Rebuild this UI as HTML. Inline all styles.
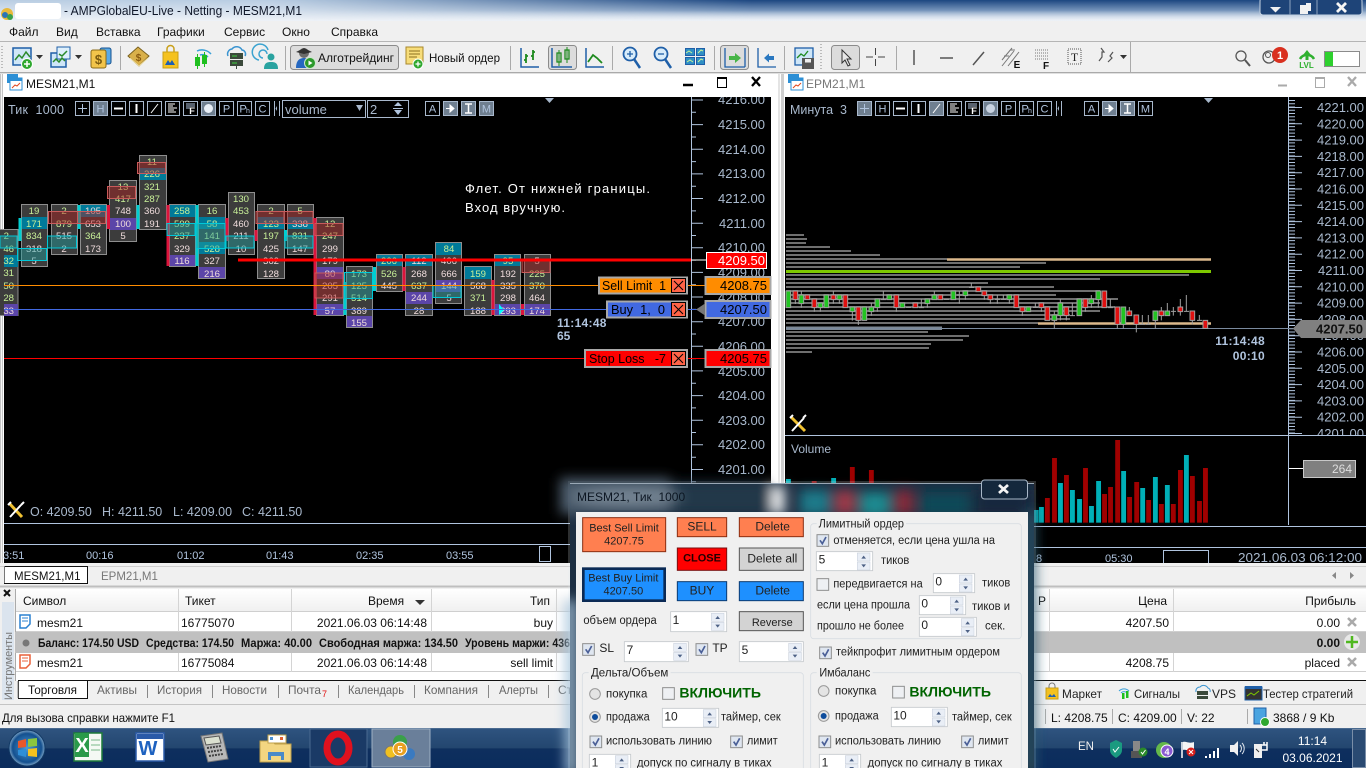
<!DOCTYPE html>
<html><head><meta charset="utf-8"><title>MESM21,M1</title>
<style>
html,body{margin:0;padding:0;background:#000;width:1366px;height:768px;overflow:hidden}
svg{display:block;font-family:"Liberation Sans","Noto Sans CJK SC",sans-serif}
.cl text{font-size:9.6px;text-anchor:middle}
.g{fill:#c8f098}.p{fill:#efdcdc}
.ax{fill:#a9b9cd;font-size:13px;text-anchor:end}
.ts{fill:#b0c4de;font-size:11px}
.m{font-size:12px;fill:#111}
.tb{fill:none;stroke:#a9b9cd;stroke-width:1}
.tf{fill:#6f7f90;stroke:#a9b9cd;stroke-width:1}
.tt{fill:#b0c4de;font-size:11px;text-anchor:middle}
.d text{font-size:36px;fill:#222}
.t{font-size:12px;fill:#111}
.gt{font-size:12px;fill:#666}
</style></head><body>
<svg width="1366" height="768" viewBox="0 0 1366 768" xmlns="http://www.w3.org/2000/svg">
<defs>
<linearGradient id="tbase" x1="0" y1="0" x2="0" y2="1"><stop offset="0" stop-color="#b9cde2"/><stop offset="1" stop-color="#eef2f7"/></linearGradient>
<linearGradient id="tdark" x1="0" y1="0" x2="0" y2="1"><stop offset="0" stop-color="#1c4680"/><stop offset=".5" stop-color="#7795bb"/><stop offset="1" stop-color="#e6ecf4" stop-opacity="0"/></linearGradient>
<linearGradient id="hm" x1="0" y1="0" x2="1" y2="0"><stop offset=".2" stop-color="#000"/><stop offset=".55" stop-color="#fff"/></linearGradient>
<mask id="mh"><rect width="1366" height="21" fill="url(#hm)"/></mask>
<linearGradient id="tk" x1="0" y1="0" x2="0" y2="1"><stop offset="0" stop-color="#2f5480"/><stop offset=".5" stop-color="#23466f"/><stop offset=".52" stop-color="#0e2f5e"/><stop offset="1" stop-color="#0b2c5c"/></linearGradient>
<linearGradient id="hd" x1="0" y1="0" x2="0" y2="1"><stop offset="0" stop-color="#fff"/><stop offset="1" stop-color="#f0f0f0"/></linearGradient>
<radialGradient id="orb"><stop offset="0" stop-color="#4a9bd8"/><stop offset=".8" stop-color="#14508f"/><stop offset="1" stop-color="#7fa6c8"/></radialGradient>
<filter id="bl" x="-20%" y="-20%" width="140%" height="140%"><feGaussianBlur stdDeviation="6"/></filter>
<g id="spin"><rect x="0" y="0" width="38" height="24" fill="#e9eef6" stroke="#c4ccd8" stroke-width="1.5"/><rect x="0" y="27" width="38" height="24" fill="#e9eef6" stroke="#c4ccd8" stroke-width="1.5"/><path d="M12 17l7-9 7 9zM12 34l7 9 7-9z" fill="#4d6185"/></g>
<g id="chk"><rect x="1" y="1" width="35" height="35" fill="#dfe6f0" stroke="#8e8f8f" stroke-width="3"/><path d="M10 18l7 10 11-20" fill="none" stroke="#4a5f97" stroke-width="5"/></g>
<g id="unc"><rect x="1" y="1" width="35" height="35" fill="#eef0f3" stroke="#8e8f8f" stroke-width="3"/></g>
</defs>

<!-- page background -->
<rect width="1366" height="768" fill="#f0f0f0"/>

<!-- title bar -->
<rect width="1366" height="21" fill="url(#tbase)"/>
<rect width="1366" height="21" fill="url(#tdark)" mask="url(#mh)"/>
<rect x="15" y="3" width="46" height="16" fill="#fff" rx="3"/>
<circle cx="7" cy="14" r="6" fill="#e8b93a"/><circle cx="5" cy="15" r="3" fill="#2a74b8"/><circle cx="10" cy="17" r="3" fill="#3aa04a"/>
<text x="64" y="15" font-size="13" fill="#10182a" textLength="238" lengthAdjust="spacingAndGlyphs">- AMPGlobalEU-Live - Netting - MESM21,M1</text>
<!-- window controls -->
<rect x="1260" y="-2" width="102" height="17" rx="3" fill="#1e4478" stroke="#c6d3e2"/>
<path d="M1290 0V15M1317 0V15" stroke="#8fa5c0"/>
<path d="M1270 7h11l-5.500 5.500z" fill="#f2f2f2"/>
<path d="M1300 5h6v-2h5v8h-3v3h-8z" fill="#f2f2f2"/>
<path d="M1337 3l9 9M1346 3l-9 9" stroke="#f5f5f5" stroke-width="2.800"/>

<!-- menu -->
<rect y="21" width="1366" height="20" fill="#f0f0f0"/>
<text class="m" x="9" y="36">Файл</text><text class="m" x="56" y="36">Вид</text><text class="m" x="96" y="36">Вставка</text><text class="m" x="157" y="36">Графики</text><text class="m" x="224" y="36">Сервис</text><text class="m" x="282" y="36">Окно</text><text class="m" x="331" y="36">Справка</text>
<rect y="41" width="1366" height="1" fill="#b5b5b5"/>

<!-- toolbar -->
<rect y="42" width="1366" height="30" fill="#f0f0f0"/>
<rect y="72" width="1366" height="1" fill="#aaa"/>
<path d="M2 46v24" stroke="#bbb" stroke-dasharray="1 2" stroke-width="2"/>
<!-- new chart -->
<rect x="13" y="48" width="18" height="17" fill="#cfe6f7" stroke="#1f5fa8" stroke-width="1.500"/><path d="M15 60l4-5 3 3 4-6 4 5" fill="none" stroke="#2a8a2a" stroke-width="1.500"/><circle cx="27" cy="64" r="5.500" fill="#2fa82f" stroke="#fff"/><path d="M24 64h6M27 61v6" stroke="#fff" stroke-width="1.500"/>
<path d="M36 55h7l-3.500 4z" fill="#333"/>
<rect x="51" y="53" width="15" height="14" fill="#cfe6f7" stroke="#1f5fa8" stroke-width="1.500"/><rect x="57" y="47" width="13" height="12" fill="#dff0fb" stroke="#1f5fa8"/><path d="M53 62l3-3 3 3 3-4 3 3M59 54l3 2 5-5" fill="none" stroke="#2a8a2a" stroke-width="1.500"/>
<path d="M75 55h7l-3.500 4z" fill="#333"/>
<!-- dollar -->
<rect x="100" y="48" width="11" height="16" rx="2" fill="#5aa9e6" stroke="#17528f"/><rect x="91" y="50" width="15" height="18" rx="2" fill="#f2c44a" stroke="#8a6a17"/><text x="98.500" y="64" font-size="13" font-weight="bold" fill="#7a5a10" text-anchor="middle">$</text>
<rect x="120" y="46" width="1" height="24" fill="#aaa"/>
<!-- book -->
<path d="M128 56l10-9 11 9-10 10z" fill="#d9b04a" stroke="#7a6220"/><path d="M130 58l9 8 9-8" fill="none" stroke="#f2e0a0"/><text x="138.500" y="61" font-size="10" font-weight="bold" fill="#8a5a10" text-anchor="middle">$</text>
<!-- bag -->
<rect x="163" y="52" width="15" height="16" fill="#f5c21f" stroke="#caa017"/><path d="M167 52v-3a3.500 3.500 0 0 1 7 0v3" fill="none" stroke="#c9a01a" stroke-width="1.500"/><path d="M165 65l3-5 2 3 2-3 3 5z" fill="#1d5fb4"/>
<!-- signal -->
<path d="M197 51a12 12 0 0 1 14 3M200 55a8 8 0 0 1 8 2" fill="none" stroke="#3aa0d8" stroke-width="1.500"/>
<rect x="195" y="57" width="5" height="9" fill="#1fbf1f"/><path d="M197.500 54v15" stroke="#1fbf1f"/><rect x="202" y="55" width="5" height="9" fill="#1fbf1f"/><path d="M204.500 52v15" stroke="#1fbf1f"/>
<!-- cloud vps -->
<path d="M228 56a5 5 0 0 1 4-7 6 6 0 0 1 10 1 4 4 0 0 1 3 6" fill="none" stroke="#3a94d0" stroke-width="1.500"/><rect x="230" y="53" width="13" height="6" fill="#3b4a3b"/><rect x="230" y="60" width="13" height="6" fill="#3b4a3b"/><path d="M232 56h5M232 63h5" stroke="#3fd03f"/>
<path d="M236.500 66v3" stroke="#3b4a3b"/>
<!-- person -->
<path d="M259 60a8 8 0 1 1 9-10M263 58a4 4 0 1 1 4-4" fill="none" stroke="#3ba3d0" stroke-width="1.500"/><circle cx="271" cy="57" r="3.500" fill="#2aa3a0"/><path d="M264 69c0-6 3-7 7-7s7 1 7 7z" fill="#2aa3a0"/>
<rect x="285" y="46" width="1" height="24" fill="#aaa"/>
<!-- algotrading -->
<rect x="290.500" y="45.500" width="108" height="24" rx="3" fill="#dcdcdc" stroke="#8b8b8b"/>
<circle cx="304" cy="53" r="5" fill="#6b6b6b"/><path d="M296 52l8-4 8 4-8 2z" fill="#333"/><path d="M296 68c0-8 4-10 8-10s8 2 8 10z" fill="#2668c0"/><circle cx="310" cy="63" r="5.500" fill="#2c9a2c" stroke="#cfe8cf"/><path d="M308.500 60.500v5l4-2.500z" fill="#fff"/>
<text x="318" y="62" font-size="12" fill="#111" textLength="76" lengthAdjust="spacingAndGlyphs">Алготрейдинг</text>
<!-- new order -->
<rect x="406" y="47" width="17" height="17" fill="#f7dd7a" stroke="#a9882a"/><path d="M409 51h11M409 54h11M409 57h8" stroke="#8a7020"/><circle cx="418" cy="64" r="5" fill="#2fa82f" stroke="#fff"/><path d="M415.500 64h5M418 61.500v5" stroke="#fff" stroke-width="1.300"/>
<text x="429" y="62" font-size="12" fill="#111" textLength="71" lengthAdjust="spacingAndGlyphs">Новый ордер</text>
<rect x="510" y="46" width="1" height="24" fill="#aaa"/>
<!-- chart type -->
<path d="M521 48v19h18" fill="none" stroke="#1f5fa8" stroke-width="1.500"/><path d="M526 54v9M524 60h2M526 56h2M533 50v10M531 56h2M533 52h2" stroke="#1e8a1e" stroke-width="1.800" fill="none"/>
<rect x="548.500" y="45.500" width="28" height="24" rx="3" fill="#dcdcdc" stroke="#8b8b8b"/>
<path d="M552 48v19h20" fill="none" stroke="#1f5fa8" stroke-width="1.500"/><rect x="557" y="53" width="4" height="9" fill="none" stroke="#1e8a1e" stroke-width="1.300"/><rect x="565" y="50" width="4" height="9" fill="none" stroke="#1e8a1e" stroke-width="1.300"/><path d="M559 50v16M567 47v16" stroke="#1e8a1e"/>
<path d="M586 48v19h18" fill="none" stroke="#1f5fa8" stroke-width="1.500"/><path d="M588 62l5-7 4 3 5 5" fill="none" stroke="#1e8a1e" stroke-width="1.800"/>
<rect x="612" y="46" width="1" height="24" fill="#aaa"/>
<!-- zoom -->
<circle cx="630" cy="54" r="6.500" fill="#d8ecfa" stroke="#1f5fa8" stroke-width="1.800"/><path d="M634 59l6 9" stroke="#1f5fa8" stroke-width="2.500"/><path d="M627 54h6M630 51v6" stroke="#1f5fa8" stroke-width="1.300"/>
<circle cx="661" cy="54" r="6.500" fill="#d8ecfa" stroke="#1f5fa8" stroke-width="1.800"/><path d="M665 59l6 9" stroke="#1f5fa8" stroke-width="2.500"/><path d="M658 54h6" stroke="#1f5fa8" stroke-width="1.300"/>
<!-- grid -->
<rect x="685.500" y="48.500" width="9" height="7" fill="#2f8fc4" stroke="#1f5fa8"/><rect x="696.500" y="48.500" width="8" height="7" fill="#2f8fc4" stroke="#1f5fa8"/><rect x="685.500" y="57.500" width="9" height="7" fill="#2f8fc4" stroke="#1f5fa8"/><rect x="696.500" y="57.500" width="8" height="7" fill="#2f8fc4" stroke="#1f5fa8"/>
<path d="M686 53l3-2 3 2M698 53l3-3 2 1M687 62l3-2 3 2M698 62l3-3 2 1" fill="none" stroke="#c8f098"/>
<rect x="714" y="46" width="1" height="24" fill="#aaa"/>
<rect x="720.500" y="45.500" width="28" height="24" rx="3" fill="#dcdcdc" stroke="#8b8b8b"/>
<path d="M725 48v19h20M745 48v19" fill="none" stroke="#1f5fa8" stroke-width="1.300"/><path d="M729 56h6v-3l6 5-6 5v-3h-6z" fill="#46b446"/>
<path d="M758 48v19h18" fill="none" stroke="#1f5fa8" stroke-width="1.300"/><path d="M774 56h-5v-2.500l-5 4.500 5 4.500v-2.500h5z" fill="#2a78c0"/>
<rect x="784" y="46" width="1" height="24" fill="#aaa"/>
<rect x="795" y="48" width="18" height="17" fill="#cfe6f7" stroke="#1f5fa8" stroke-width="1.300"/><path d="M797 58l4-4 3 2 4-5" fill="none" stroke="#1e8a1e" stroke-width="1.300"/><rect x="802" y="58" width="12" height="11" fill="#555"/><rect x="805" y="59" width="6" height="3.500" fill="#eee"/>
<path d="M821 44v26" stroke="#bbb" stroke-dasharray="1 2" stroke-width="2"/>
<rect x="831.500" y="45.500" width="28" height="24" rx="3" fill="#dcdcdc" stroke="#8b8b8b"/>
<path d="M842 50v13l3-3 3 6 2-1-3-6h4z" fill="#e8e8e8" stroke="#333"/>
<path d="M866 57h7M878 57h7M875.500 48v7M875.500 59v7" stroke="#444"/>
<rect x="896" y="46" width="1" height="24" fill="#aaa"/>
<path d="M914 50v15" stroke="#555" stroke-width="1.500"/><path d="M940 58h13" stroke="#555" stroke-width="1.500"/><path d="M973 65l11-13" stroke="#555" stroke-width="1.500"/>
<path d="M1002 66l12-15M1002 60l10-12M1008 66l11-14M1004 56h5M1010 50h5" stroke="#777" fill="none"/><text x="1017" y="68" font-size="10" font-weight="bold" fill="#111" text-anchor="middle">E</text>
<path d="M1035 50h13M1035 53h13M1035 56h13M1035 59h13" stroke="#777" stroke-dasharray="1 1"/><text x="1046" y="69" font-size="10" font-weight="bold" fill="#111" text-anchor="middle">F</text>
<rect x="1068" y="49" width="13" height="15" fill="none" stroke="#555" stroke-dasharray="1 1"/><text x="1074.500" y="61" font-size="12" fill="#222" text-anchor="middle" font-family="Liberation Serif">T</text>
<path d="M1101 48l3 4h-2v5l-3 4M1108 62l4-4-2-2 3-4" fill="none" stroke="#555" stroke-width="1.200"/>
<path d="M1120 55h7l-3.500 4z" fill="#333"/>
<rect x="1130" y="42" width="1" height="30" fill="#aaa"/>
<circle cx="1241" cy="56" r="5" fill="none" stroke="#555" stroke-width="1.300"/><path d="M1245 60l5 6" stroke="#555" stroke-width="2"/>
<circle cx="1269" cy="57" r="6" fill="none" stroke="#555" stroke-width="1.300"/><circle cx="1268" cy="55" r="2.500" fill="none" stroke="#555"/><circle cx="1280" cy="55" r="8" fill="#d9301f"/><text x="1280" y="59" font-size="11" font-weight="bold" fill="#fff" text-anchor="middle">1</text>
<path d="M1300 59a8 8 0 0 1 14 0" fill="none" stroke="#2fb02f" stroke-width="2.500"/><path d="M1307 50l4 5h-2.500v5h-3v-5h-2.500z" fill="#2fb02f"/><text x="1306.500" y="68" font-size="8" font-weight="bold" fill="#2fb02f" text-anchor="middle">LVL</text>
<rect x="1324.500" y="51.500" width="35" height="15" fill="#fff" stroke="#8b8b8b"/><rect x="1325" y="52" width="8" height="14" fill="#2ed02e"/>

<!-- chart windows bg -->
<rect y="73" width="1366" height="493" fill="#fff"/>
<rect x="0" y="73" width="3" height="493" fill="#c4c4c4"/><rect x="1" y="73" width="1" height="493" fill="#f4f4f4"/>
<rect x="778" y="73" width="2" height="493" fill="#e4e4e4"/><rect x="781" y="73" width="3" height="493" fill="#cfcfcf"/>

<!-- LEFT CHART -->
<rect x="4" y="97" width="767" height="466" fill="#000"/>
<!-- left axis -->
<g class="ax">
<text x="765" y="104">4216.00</text><text x="765" y="129">4215.00</text><text x="765" y="154">4214.00</text><text x="765" y="178">4213.00</text><text x="765" y="203">4212.00</text><text x="765" y="228">4211.00</text><text x="765" y="252">4210.00</text><text x="765" y="277">4209.00</text><text x="765" y="302">4208.00</text><text x="765" y="326">4207.00</text><text x="765" y="351">4206.00</text><text x="765" y="376">4205.00</text><text x="765" y="400">4204.00</text><text x="765" y="425">4203.00</text><text x="765" y="449">4202.00</text><text x="765" y="474">4201.00</text>
</g>
<path d="M691.500 97V523" stroke="#b0c4de"/>
<path d="M691 100h12M691 124.600h12M691 149.300h12M691 173.900h12M691 198.500h12M691 223.200h12M691 247.800h12M691 272.400h12M691 297h12M691 321.700h12M691 346.300h12M691 370.900h12M691 395.600h12M691 420.200h12M691 444.800h12M691 469.500h12M691 494h12" stroke="#b0c4de"/>
<path d="M691 112.300h5M691 137h5M691 161.600h5M691 186.200h5M691 210.900h5M691 235.500h5M691 260.100h5M691 284.700h5M691 309.400h5M691 334h5M691 358.600h5M691 383.300h5M691 407.900h5M691 432.500h5M691 457.200h5M691 481.800h5M691 506.400h5" stroke="#b0c4de"/>

<!-- clusters -->
<g class="cl">
<!-- col0 -->
<rect x="-4" y="229.500" width="22" height="86" fill="#3c3c3c" stroke="#8e8e8e"/>
<rect x="4" y="255" width="14" height="12" fill="#007a99"/><rect x="4" y="304" width="14" height="12" fill="#5b45a8"/>
<g style="text-anchor:end"><text class="g" x="9" y="239" style="text-anchor:end">2</text><text class="g" x="14" y="252" style="text-anchor:end">46</text><text class="g" x="14" y="264" style="text-anchor:end">32</text><text class="g" x="14" y="276" style="text-anchor:end">31</text><text class="g" x="14" y="289" style="text-anchor:end">50</text><text class="g" x="14" y="301" style="text-anchor:end">28</text><text class="p" x="14" y="314" style="text-anchor:end">33</text></g>
<!-- col1 -->
<rect x="21.500" y="204.500" width="26" height="62" fill="#3c3c3c" stroke="#8e8e8e"/><rect x="22" y="217" width="25" height="12" fill="#007a99"/>
<text class="g" x="34" y="214">19</text><text class="g" x="34" y="227">171</text><text class="g" x="34" y="239">834</text><text class="p" x="34" y="252">318</text><text class="p" x="34" y="264">5</text>
<!-- col2 -->
<rect x="51.500" y="204.500" width="26" height="50" fill="#3c3c3c" stroke="#8e8e8e"/>
<text class="g" x="64" y="214">2</text><text class="g" x="64" y="227">879</text><text class="p" x="64" y="239">515</text><text class="p" x="64" y="252">2</text>
<!-- col3 -->
<rect x="80.500" y="204.500" width="26" height="50" fill="#3c3c3c" stroke="#8e8e8e"/><rect x="81" y="205" width="25" height="12" fill="#007a99"/>
<text class="p" x="93" y="214">105</text><text class="p" x="93" y="227">653</text><text class="g" x="93" y="239">364</text><text class="p" x="93" y="252">173</text>
<!-- col4 -->
<rect x="109.500" y="180.500" width="27" height="61" fill="#3c3c3c" stroke="#8e8e8e"/><rect x="110" y="218" width="26" height="12" fill="#5b45a8"/>
<text class="g" x="123" y="190">13</text><text class="g" x="123" y="202">417</text><text class="p" x="123" y="214">748</text><text class="p" x="123" y="227">100</text><text class="p" x="123" y="239">5</text>
<!-- col5 -->
<rect x="139.500" y="155.500" width="27" height="74" fill="#3c3c3c" stroke="#8e8e8e"/><rect x="140" y="168" width="26" height="12" fill="#007a99"/>
<text class="g" x="152" y="165">11</text><text class="g" x="152" y="177">226</text><text class="g" x="152" y="190">321</text><text class="g" x="152" y="202">287</text><text class="p" x="152" y="214">360</text><text class="p" x="152" y="227">191</text>
<!-- col6 -->
<rect x="169.500" y="204.500" width="26" height="62" fill="#3c3c3c" stroke="#8e8e8e"/><rect x="170" y="205" width="25" height="12" fill="#007a99"/><rect x="170" y="255" width="25" height="11" fill="#5b45a8"/>
<text class="g" x="182" y="214">258</text><text class="g" x="182" y="227">599</text><text class="g" x="182" y="239">237</text><text class="p" x="182" y="252">329</text><text class="p" x="182" y="264">116</text>
<!-- col7 -->
<rect x="198.500" y="204.500" width="27" height="74" fill="#3c3c3c" stroke="#8e8e8e"/><rect x="199" y="217" width="26" height="12" fill="#007a99"/><rect x="199" y="242" width="26" height="12" fill="#007a99"/><rect x="199" y="267" width="26" height="11" fill="#5b45a8"/>
<text class="g" x="212" y="214">16</text><text class="g" x="212" y="227">58</text><text class="g" x="212" y="239">141</text><text class="g" x="212" y="252">528</text><text class="p" x="212" y="264">327</text><text class="p" x="212" y="277">216</text>
<!-- col8 -->
<rect x="228.500" y="192.500" width="26" height="62" fill="#3c3c3c" stroke="#8e8e8e"/>
<text class="g" x="241" y="202">130</text><text class="g" x="241" y="214">453</text><text class="p" x="241" y="227">460</text><text class="p" x="241" y="239">211</text><text class="p" x="241" y="252">10</text>
<!-- col9 -->
<rect x="257.500" y="204.500" width="27" height="74" fill="#3c3c3c" stroke="#8e8e8e"/><rect x="258" y="217" width="26" height="12" fill="#007a99"/>
<text class="g" x="271" y="214">2</text><text class="g" x="271" y="227">123</text><text class="g" x="271" y="239">197</text><text class="p" x="271" y="252">425</text><text class="p" x="271" y="264">362</text><text class="p" x="271" y="277">128</text>
<!-- col10 -->
<rect x="287.500" y="204.500" width="26" height="50" fill="#3c3c3c" stroke="#8e8e8e"/><rect x="288" y="217" width="25" height="12" fill="#007a99"/>
<text class="g" x="300" y="214">5</text><text class="p" x="300" y="227">338</text><text class="g" x="300" y="239">831</text><text class="p" x="300" y="252">147</text>
<!-- col11 -->
<rect x="316.500" y="217.500" width="27" height="98" fill="#3c3c3c" stroke="#8e8e8e"/><rect x="317" y="267" width="26" height="12" fill="#5b45a8"/><rect x="317" y="304" width="26" height="11" fill="#5b45a8"/>
<text class="g" x="330" y="227">12</text><text class="g" x="330" y="239">247</text><text class="p" x="330" y="252">299</text><text class="p" x="330" y="264">179</text><text class="p" x="330" y="277">80</text><text class="p" x="330" y="289">205</text><text class="p" x="330" y="301">291</text><text class="p" x="330" y="314">57</text>
<!-- col12 -->
<rect x="346.500" y="266.500" width="26" height="61" fill="#3c3c3c" stroke="#8e8e8e"/><rect x="347" y="316" width="25" height="11" fill="#5b45a8"/>
<text class="g" x="359" y="277">173</text><text class="g" x="359" y="289">125</text><text class="g" x="359" y="301">514</text><text class="p" x="359" y="314">389</text><text class="p" x="359" y="326">155</text>
<!-- col13 -->
<rect x="376.500" y="254.500" width="26" height="37" fill="#3c3c3c" stroke="#8e8e8e"/><rect x="377" y="255" width="25" height="11" fill="#007a99"/>
<text class="g" x="389" y="264">206</text><text class="g" x="389" y="277">526</text><text class="p" x="389" y="289">445</text>
<!-- col14 -->
<rect x="405.500" y="254.500" width="27" height="61" fill="#3c3c3c" stroke="#8e8e8e"/><rect x="406" y="255" width="26" height="11" fill="#007a99"/><rect x="406" y="292" width="26" height="12" fill="#5b45a8"/>
<text class="p" x="419" y="264">112</text><text class="p" x="419" y="277">268</text><text class="g" x="419" y="289">637</text><text class="p" x="419" y="301">244</text><text class="p" x="419" y="314">28</text>
<!-- col15 -->
<rect x="435.500" y="242.500" width="26" height="61" fill="#3c3c3c" stroke="#8e8e8e"/><rect x="436" y="243" width="25" height="12" fill="#007a99"/><rect x="436" y="280" width="25" height="12" fill="#5b45a8"/>
<text class="g" x="449" y="252">84</text><text class="p" x="449" y="264">406</text><text class="p" x="449" y="277">666</text><text class="p" x="449" y="289">144</text><text class="p" x="449" y="301">5</text>
<!-- col16 -->
<rect x="464.500" y="266.500" width="27" height="49" fill="#3c3c3c" stroke="#8e8e8e"/><rect x="465" y="267" width="26" height="12" fill="#007a99"/>
<text class="g" x="478" y="277">159</text><text class="p" x="478" y="289">568</text><text class="g" x="478" y="301">371</text><text class="p" x="478" y="314">188</text>
<!-- col17 -->
<rect x="494.500" y="254.500" width="26" height="61" fill="#3c3c3c" stroke="#8e8e8e"/><rect x="495" y="255" width="25" height="11" fill="#007a99"/><rect x="495" y="304" width="25" height="11" fill="#5b45a8"/>
<text class="g" x="508" y="264">95</text><text class="p" x="508" y="277">192</text><text class="p" x="508" y="289">335</text><text class="p" x="508" y="301">298</text><text class="p" x="508" y="314">293</text>
<!-- col18 -->
<rect x="524.500" y="254.500" width="26" height="61" fill="#3c3c3c" stroke="#8e8e8e"/><rect x="525" y="304" width="25" height="11" fill="#5b45a8"/>
<text class="p" x="537" y="264">5</text><text class="g" x="537" y="277">225</text><text class="g" x="537" y="289">370</text><text class="p" x="537" y="301">464</text><text class="p" x="537" y="314">174</text>
</g>
<!-- delta bars -->
<path d="M20 218V241M79 205V229M138 205V229M197 205V266M285.500 230V241M345 282V315M374.500 267V291" stroke="#00ced1" stroke-width="3" fill="none"/>
<path d="M108.500 205V229M168 205V266M227 218V241M256 230V241M315 218V315M404 267V291M493 280V315M522.500 304V315" stroke="#dc143c" stroke-width="3" fill="none"/>
<path d="M499 304l5 6-5 5z" fill="#00ffff"/>
<!-- imbalance overlays -->
<g fill="#b02020" fill-opacity=".45" stroke="#c85a5a">
<rect x="137.500" y="162.500" width="28" height="11"/><rect x="107.500" y="186.500" width="28" height="12"/><rect x="48.500" y="211.500" width="29" height="12"/><rect x="77.500" y="211.500" width="28" height="12"/><rect x="256" y="211.500" width="28" height="12"/><rect x="284" y="211.500" width="29" height="12"/><rect x="315" y="223.500" width="28" height="12"/><rect x="315" y="273" width="28" height="25"/><rect x="522" y="260.500" width="28" height="12"/>
</g>
<g fill="#20a0a0" fill-opacity=".45" stroke="#00c8d8">
<rect x="0" y="236" width="17" height="12"/><rect x="17.500" y="248.500" width="29" height="12"/><rect x="47.500" y="236" width="29" height="12"/><rect x="167" y="223.500" width="28" height="12"/><rect x="196" y="223.500" width="29" height="25"/><rect x="226" y="236" width="28" height="12"/><rect x="285" y="236" width="28" height="12"/><rect x="344.500" y="272.500" width="28" height="26"/><rect x="433" y="285.500" width="28" height="12"/>
</g>
<!-- order lines -->
<rect x="238" y="258.500" width="453" height="3" fill="#f00"/><path d="M691 260h15" stroke="#fff"/>
<path d="M4 285.500H705" stroke="#ff8c00"/><path d="M4 309.500H697" stroke="#4169e1"/><path d="M4 358.500H705" stroke="#f00"/>
<!-- price labels -->
<rect x="706.500" y="252.500" width="60" height="16" fill="#f00" stroke="#fff"/><text x="765" y="265" font-size="13" fill="#fff" text-anchor="end">4209.50</text>
<rect x="705.500" y="277" width="65" height="17" fill="#ff8c00" stroke="#a8a8a8" stroke-width="2"/><text x="767" y="290" font-size="13" fill="#000" text-anchor="end">4208.75</text>
<rect x="705.500" y="301" width="65" height="17" fill="#4169e1" stroke="#a8a8a8" stroke-width="2"/><text x="767" y="314" font-size="13" fill="#000" text-anchor="end">4207.50</text>
<path d="M696 309.500l9-6v12z" fill="#777"/>
<rect x="705.500" y="350" width="65" height="17" fill="#f00" stroke="#a8a8a8" stroke-width="2"/><text x="767" y="363" font-size="13" fill="#000" text-anchor="end">4205.75</text>
<!-- order boxes -->
<rect x="599" y="277.500" width="88" height="16" fill="#ff8c00" stroke="#a8a8a8" stroke-width="2"/><text x="602" y="290" font-size="13" fill="#000" textLength="64" lengthAdjust="spacingAndGlyphs">Sell Limit&#160;&#160;1</text>
<rect x="671.500" y="278.500" width="14" height="14" fill="#ff6347" stroke="#000"/><path d="M674 281l9 9M683 281l-9 9" stroke="#000"/>
<rect x="607" y="301.500" width="80" height="16" fill="#4169e1" stroke="#a8a8a8" stroke-width="2"/><text x="611" y="314" font-size="13" fill="#000" textLength="54" lengthAdjust="spacingAndGlyphs">Buy&#160;&#160;1,&#160;&#160;0</text>
<rect x="671.500" y="302.500" width="14" height="14" fill="#ff6347" stroke="#000"/><path d="M674 305l9 9M683 305l-9 9" stroke="#000"/>
<rect x="585" y="350" width="102" height="17" fill="#f00" stroke="#a8a8a8" stroke-width="2"/><text x="589" y="363" font-size="13" fill="#000" textLength="77" lengthAdjust="spacingAndGlyphs">Stop Loss&#160;&#160;&#160;-7</text>
<rect x="671.500" y="351.500" width="14" height="14" fill="#ff6347" stroke="#000"/><path d="M674 354l9 9M683 354l-9 9" stroke="#000"/>
<text x="557" y="327" font-size="12" font-weight="bold" fill="#b0c4de" letter-spacing=".3">11:14:48</text><text x="557" y="340" font-size="12" font-weight="bold" fill="#b0c4de">65</text>
<text x="465" y="193" font-size="13" fill="#fff" textLength="185" lengthAdjust="spacing">Флет. От нижней границы.</text><text x="465" y="212" font-size="13" fill="#fff" textLength="100" lengthAdjust="spacing">Вход вручную.</text>
<!-- chart tool bar left -->
<text x="8" y="114" font-size="12.500" fill="#a9b9cd" textLength="56" lengthAdjust="spacing">Тик&#160;&#160;1000</text>
<rect class="tb" x="75.500" y="101.500" width="14" height="14"/><path d="M78 108.500h9M82.500 104v9" stroke="#b0c4de"/>
<rect class="tf" x="93.500" y="101.500" width="14" height="14"/><text class="tt" x="100.500" y="112.500">H</text>
<rect class="tb" x="111.500" y="101.500" width="14" height="14"/><path d="M114 108.500h9" stroke="#fff" stroke-width="2"/>
<rect class="tb" x="129.500" y="101.500" width="14" height="14"/><path d="M136.500 104v9" stroke="#fff" stroke-width="2"/>
<rect class="tb" x="147.500" y="101.500" width="14" height="14"/><path d="M151 113l7-9" stroke="#fff"/>
<rect class="tb" x="165.500" y="101.500" width="14" height="14"/><path d="M168 104h7M168 106h5M168 108h9M168 110h6M168 112h8" stroke="#fff"/>
<rect class="tb" x="183.500" y="101.500" width="14" height="14"/><path d="M186 104h9M186 106h9M186 108h9" stroke="#b0c4de"/><text x="192" y="114" font-size="9" fill="#fff" font-weight="bold" text-anchor="middle">F</text>
<rect class="tf" x="201.500" y="101.500" width="14" height="14"/><circle cx="208.500" cy="108.500" r="4.500" fill="#e8eef6"/>
<rect class="tb" x="219.500" y="101.500" width="14" height="14"/><text class="tt" x="226.500" y="112.500">P</text>
<rect class="tb" x="237.500" y="101.500" width="14" height="14"/><text class="tt" x="243" y="112.500">P</text><text x="248" y="113" font-size="7" fill="#b0c4de" text-anchor="middle">h</text>
<rect class="tb" x="255.500" y="101.500" width="14" height="14"/><text class="tt" x="262.500" y="112.500">C</text>
<path d="M274.500 101v15M279.500 101v15" stroke="#a9b9cd"/><path d="M277 106l-1.500 2.500 1.500 2.500z" fill="#a9b9cd"/>
<rect class="tb" x="282.500" y="100.500" width="83" height="17"/><text x="285" y="114" font-size="13" fill="#a9b9cd">volume</text><path d="M356 105h7l-3.500 6z" fill="#a9b9cd"/>
<rect class="tb" x="367.500" y="100.500" width="41" height="17"/><text x="370" y="114" font-size="13" fill="#a9b9cd">2</text><path d="M394 106h8l-4-4zM394 110h8l-4 5z" fill="#b0c4de"/><path d="M393 108.500h10" stroke="#b0c4de"/>
<rect class="tb" x="425.500" y="101.500" width="14" height="14"/><text class="tt" x="432.500" y="112.500">A</text>
<rect class="tf" x="443.500" y="101.500" width="14" height="14"/><path d="M446 108.500h7M450 105l4 3.500-4 3.500z" stroke="#fff" fill="#fff"/>
<rect class="tf" x="461.500" y="101.500" width="14" height="14"/><path d="M465 104h7M468.500 104v9M465 113h7" stroke="#fff" stroke-width="1.500"/>
<rect class="tf" x="479.500" y="101.500" width="14" height="14"/><text class="tt" x="486.500" y="112.500">M</text>
<path d="M545 98h9l-4.500 5z" fill="#a9b9cd"/>
<!-- ohlc -->
<path d="M4 523.500H691M4 544.500H771" stroke="#b0c4de"/>
<path d="M9 503l13 14" stroke="#f1c232" stroke-width="3"/><path d="M10 517l11-12M8 505l3-3" stroke="#fff" stroke-width="2"/><path d="M21 505l3-3" stroke="#fff" stroke-width="2"/>
<g font-size="12.500" fill="#a9b9cd"><text x="30" y="516">O: 4209.50</text><text x="102" y="516">H: 4211.50</text><text x="173" y="516">L: 4209.00</text><text x="242" y="516">C: 4211.50</text></g>
<g class="ts"><text x="3" y="559">3:51</text><text x="86" y="559">00:16</text><text x="177" y="559">01:02</text><text x="266" y="559">01:43</text><text x="356" y="559">02:35</text><text x="446" y="559">03:55</text></g>
<rect x="539.500" y="546.500" width="11" height="15" fill="none" stroke="#b0c4de"/>

<!-- RIGHT CHART -->
<rect x="785" y="97" width="581" height="466" fill="#000"/>
<g class="ax">
<text x="1364" y="112">4221.00</text><text x="1364" y="128.300">4220.00</text><text x="1364" y="144.600">4219.00</text><text x="1364" y="160.900">4218.00</text><text x="1364" y="177.200">4217.00</text><text x="1364" y="193.500">4216.00</text><text x="1364" y="209.800">4215.00</text><text x="1364" y="226.100">4214.00</text><text x="1364" y="242.400">4213.00</text><text x="1364" y="258.700">4212.00</text><text x="1364" y="275">4211.00</text><text x="1364" y="291.300">4210.00</text><text x="1364" y="307.600">4209.00</text><text x="1364" y="323.900">4208.00</text><text x="1364" y="340.200">4207.00</text><text x="1364" y="356.500">4206.00</text><text x="1364" y="372.800">4205.00</text><text x="1364" y="389.100">4204.00</text><text x="1364" y="405.400">4203.00</text><text x="1364" y="421.700">4202.00</text><text x="1364" y="438">4201.00</text>
</g>
<path d="M1288.500 97V525" stroke="#b0c4de"/>
<path d="M1289 107.500h13M1289 123.800h13M1289 140.100h13M1289 156.400h13M1289 172.700h13M1289 189h13M1289 205.300h13M1289 221.600h13M1289 237.900h13M1289 254.200h13M1289 270.500h13M1289 286.800h13M1289 303.100h13M1289 319.400h13M1289 335.700h13M1289 352h13M1289 368.300h13M1289 384.600h13M1289 400.900h13M1289 417.200h13M1289 433.500h13" stroke="#b0c4de"/>
<path d="M1292 100V435" stroke="#b0c4de" stroke-width="6" stroke-dasharray="1 2.260"/>
<rect x="785" y="435" width="581" height="10" fill="#000"/>
<path d="M785 435.500H1366" stroke="#b0c4de"/><path d="M1288.500 435V525" stroke="#b0c4de"/><path d="M785 526.500H1366M785 547.500H1366" stroke="#b0c4de"/>
<!-- profile -->
<path d="M786 235H804M786 239H807M786 243H806M786 247H830M786 251H851M786 255H880M786 259H947M786 263H1046M786 267H1020M786 275H1189M786 279H1100M786 283H988M786 287H1054M786 291H1100M786 295H1056M786 299H1118M786 303H1100M786 307H1115M786 311H1100M786 315H1070M786 319H1070M786 323H1038M786 332H928M786 336H969M786 340H963M786 344H931M786 348H929M786 352H812" stroke="#6f6f6f" stroke-width="2"/>
<rect x="786" y="326.500" width="156" height="3.500" fill="#7d8894"/><path d="M786 328.500H1289" stroke="#7a8a9e"/>
<path d="M947 259.500H1211M1038 323.500H1211" stroke="#dcb98c" stroke-width="2.500"/>
<path d="M786 271.500H1211" stroke="#7ec800" stroke-width="3"/>
<g transform="translate(780,230) scale(.33333)">
<path d="M46 209V222M64 183V233M103 233V245M121 233V245M160 183V221M178 209V221M217 245V272M235 271V285M274 219V257M292 233V245M349 233V245M424 207V233M442 221V233M463 183V195M538 183V221M556 197V209M574 159V172M613 197V209M631 209V221M652 195V221M670 195V208M688 209V221M727 245V257M766 219V232M784 233V245M823 243V295M841 207V271M859 257V271M877 219V257M916 233V245M934 195V233M955 209V233M991 207V233M1012 283V295M1030 283V295M1048 231V243M1069 283V307M1087 255V283M1105 255V283M1126 271V295M1144 231V271M1162 219V243M1180 231V257M1201 207V257M1219 195V245M1237 271V283M1258 255V271M310 183V209M303 209h15M378 232h15M417 233h15M492 208h15M531 195h15M567 172h15M645 208h15M663 208h15M759 232h15M870 257h15M984 233h15M1080 283h15M1098 283h15M1173 244h15M1212 244h15M1251 271h15" stroke="#a0a0a0" stroke-width="3" fill="none"/>
<path d="M18 183h14V233h-14zM57 195h14V221h-14zM114 219h14V233h-14zM132 195h14V233h-14zM171 195h14V209h-14zM210 231h14V245h-14zM246 231h14V271h-14zM267 231h14V245h-14zM285 207h14V233h-14zM321 195h14V209h-14zM360 219h14V233h-14zM435 207h14V221h-14zM456 195h14V209h-14zM513 183h14V209h-14zM549 183h14V197h-14zM681 195h14V209h-14zM738 231h14V245h-14zM816 255h14V271h-14zM834 219h14V257h-14zM891 207h14V257h-14zM927 207h14V221h-14zM948 183h14V209h-14zM1023 231h14V283h-14zM1119 243h14V271h-14zM1155 243h14V257h-14z" fill="#22c422" stroke="#a0a0a0" stroke-width="3"/>
<path d="M39 183h14V209h-14zM75 195h14V209h-14zM96 207h14V233h-14zM153 195h14V209h-14zM189 195h14V233h-14zM228 231h14V271h-14zM342 195h14V233h-14zM399 219h14V233h-14zM474 195h14V209h-14zM588 171h14V185h-14zM606 183h14V197h-14zM624 195h14V209h-14zM702 195h14V233h-14zM720 231h14V245h-14zM777 219h14V233h-14zM795 231h14V271h-14zM852 231h14V257h-14zM909 207h14V233h-14zM966 183h14V233h-14zM1005 231h14V283h-14zM1041 243h14V257h-14zM1062 255h14V283h-14zM1137 243h14V257h-14zM1194 231h14V245h-14zM1230 243h14V271h-14zM1269 271h14V295h-14z" fill="#e01010" stroke="#a0a0a0" stroke-width="3"/>
</g>
<!-- price tag -->
<path d="M1293 328.500l8-8.500H1366V338H1301z" fill="#808080"/>
<text x="1363" y="333.500" font-size="13" font-weight="bold" fill="#111" text-anchor="end">4207.50</text>
<g font-size="12" font-weight="bold" fill="#b0c4de" text-anchor="end" letter-spacing=".3"><text x="1265" y="345">11:14:48</text><text x="1265" y="360">00:10</text></g>
<!-- tool icon -->
<path d="M791 417l14 14" stroke="#f1c232" stroke-width="3"/><path d="M792 431l12-13M790 418l3-3M803 418l3-3" stroke="#fff" stroke-width="2"/>
<!-- volume -->
<text x="791" y="453" font-size="12" fill="#a9b9cd">Volume</text>
<g transform="translate(780,330) scale(.3737,.33333)">
<g fill="#a00000"><rect x="85" y="453" width="13" height="125"/><rect x="187" y="411" width="13" height="167"/><rect x="238" y="420" width="13" height="158"/><rect x="709" y="504" width="13" height="74"/><rect x="728" y="384" width="13" height="194"/><rect x="760" y="435" width="13" height="143"/><rect x="811" y="414" width="13" height="164"/><rect x="862" y="492" width="13" height="86"/><rect x="878" y="471" width="13" height="107"/><rect x="897" y="330" width="13" height="248"/><rect x="929" y="501" width="13" height="77"/><rect x="948" y="456" width="13" height="122"/><rect x="980" y="510" width="13" height="68"/><rect x="1014" y="522" width="13" height="56"/><rect x="1046" y="522" width="13" height="56"/><rect x="1065" y="420" width="13" height="158"/><rect x="1097" y="438" width="13" height="140"/><rect x="1116" y="513" width="13" height="65"/><rect x="1132" y="414" width="13" height="164"/></g>
<g fill="#00b0b8"><rect x="16" y="447" width="13" height="131"/><rect x="137" y="444" width="13" height="134"/><rect x="679" y="540" width="13" height="38"/><rect x="693" y="531" width="13" height="47"/><rect x="744" y="459" width="13" height="119"/><rect x="776" y="480" width="13" height="98"/><rect x="795" y="507" width="13" height="71"/><rect x="827" y="528" width="13" height="50"/><rect x="846" y="453" width="13" height="125"/><rect x="913" y="423" width="13" height="155"/><rect x="964" y="474" width="13" height="104"/><rect x="998" y="441" width="13" height="137"/><rect x="1030" y="465" width="13" height="113"/><rect x="1081" y="375" width="13" height="203"/></g>
</g>
<rect x="1303.500" y="460.500" width="52" height="17" fill="#808080" stroke="#c8c8c8"/><text x="1352" y="473" font-size="12" fill="#ddd" text-anchor="end">264</text><path d="M1289 468.500h14" stroke="#fff"/>
<g class="ts"><text x="1036" y="562">8</text><text x="1105" y="562">05:30</text></g>
<text x="1362" y="562" font-size="13" fill="#a9b9cd" text-anchor="end" textLength="124" lengthAdjust="spacingAndGlyphs">2021.06.03 06:12:00</text>
<rect x="1163.500" y="550.500" width="45" height="14" fill="none" stroke="#b0c4de"/>
<!-- chart tool bar right -->
<text x="790" y="114" font-size="12.500" fill="#a9b9cd">Минута&#160;&#160;3</text>
<rect class="tf" x="857.500" y="101.500" width="14" height="14"/><path d="M860 108.500h9M864.500 104v9" stroke="#b0c4de"/>
<rect class="tb" x="875.500" y="101.500" width="14" height="14"/><text class="tt" x="882.500" y="112.500">H</text>
<rect class="tb" x="893.500" y="101.500" width="14" height="14"/><path d="M896 108.500h9" stroke="#fff" stroke-width="2"/>
<rect class="tb" x="911.500" y="101.500" width="14" height="14"/><path d="M918.500 104v9" stroke="#fff" stroke-width="2"/>
<rect class="tf" x="929.500" y="101.500" width="14" height="14"/><path d="M933 113l7-9" stroke="#fff"/>
<rect class="tb" x="947.500" y="101.500" width="14" height="14"/><path d="M950 104h7M950 106h5M950 108h9M950 110h6M950 112h8" stroke="#fff"/>
<rect class="tb" x="965.500" y="101.500" width="14" height="14"/><path d="M968 104h9M968 106h9M968 108h9" stroke="#b0c4de"/><text x="974" y="114" font-size="9" fill="#fff" font-weight="bold" text-anchor="middle">F</text>
<rect class="tf" x="983.500" y="101.500" width="14" height="14"/><circle cx="990.500" cy="108.500" r="4.500" fill="#c8d2e0"/>
<rect class="tb" x="1001.500" y="101.500" width="14" height="14"/><text class="tt" x="1008.500" y="112.500">P</text>
<rect class="tb" x="1019.500" y="101.500" width="14" height="14"/><text class="tt" x="1025" y="112.500">P</text><text x="1030" y="113" font-size="7" fill="#b0c4de" text-anchor="middle">h</text>
<rect class="tb" x="1037.500" y="101.500" width="14" height="14"/><text class="tt" x="1044.500" y="112.500">C</text>
<path d="M1056.500 101v15M1061.500 101v15" stroke="#a9b9cd"/><path d="M1059 106l-1.500 2.500 1.500 2.500z" fill="#a9b9cd"/>
<rect class="tb" x="1084.500" y="101.500" width="14" height="14"/><text class="tt" x="1091.500" y="112.500">A</text>
<rect class="tf" x="1102.500" y="101.500" width="14" height="14"/><path d="M1105 108.500h7M1109 105l4 3.500-4 3.500z" stroke="#fff" fill="#fff"/>
<rect class="tf" x="1120.500" y="101.500" width="14" height="14"/><path d="M1124 104h7M1127.500 104v9M1124 113h7" stroke="#fff" stroke-width="1.500"/>
<rect class="tb" x="1138.500" y="101.500" width="14" height="14"/><text class="tt" x="1145.500" y="112.500">M</text>
<path d="M1204 98h9l-4.500 5z" fill="#a9b9cd"/>

<!-- window titles -->
<rect x="3" y="73" width="775" height="24" fill="#fff"/><rect x="784" y="73" width="582" height="24" fill="#fff"/>
<rect y="73" width="1366" height="1" fill="#e0e0e0"/>
<rect x="7" y="74" width="11" height="9" fill="#2d8fd5"/><rect x="10" y="78" width="12" height="12" fill="#fff" stroke="#2d8fd5"/><rect x="10" y="78" width="12" height="3" fill="#2d8fd5"/><path d="M12 88l3-3 2 1 3-3" fill="none" stroke="#e0481f"/>
<text x="26" y="88" font-size="12" fill="#111">MESM21,M1</text>
<path d="M683 85h10" stroke="#000" stroke-width="2.500"/>
<rect x="717.500" y="77.500" width="9" height="10" fill="#fff" stroke="#000"/><path d="M717 78h10" stroke="#000" stroke-width="2"/>
<path d="M752 77l8 9M760 77l-8 9" stroke="#000" stroke-width="2.300"/>
<rect x="788" y="74" width="11" height="9" fill="#2d8fd5"/><rect x="791" y="78" width="12" height="12" fill="#fff" stroke="#2d8fd5"/><rect x="791" y="78" width="12" height="3" fill="#2d8fd5"/><path d="M793 88l3-3 2 1 3-3" fill="none" stroke="#e0481f"/>
<text x="806" y="88" font-size="12" fill="#777">EPM21,M1</text>
<path d="M1278 85.500h9" stroke="#aaa" stroke-width="2"/><rect x="1315.500" y="77.500" width="9" height="10" fill="#fff" stroke="#aaa"/><path d="M1315 78h10" stroke="#aaa" stroke-width="2"/><path d="M1348 77l8 9M1356 77l-8 9" stroke="#aaa" stroke-width="2.300"/>

<!-- chart tabs -->
<rect y="563" width="1366" height="25" fill="#f0f0f0"/>
<path d="M0 566.500H1366" stroke="#cfcfcf"/>
<path d="M0 586.500H1366" stroke="#bfbfbf" stroke-width="2"/>
<path d="M4.500 583V566.500H87.500V583.500H4" fill="#fff" stroke="#111"/><path d="M4.500 566V583" stroke="#777"/>
<text x="14" y="580" font-size="11.500" fill="#111">MESM21,M1</text><text x="101" y="580" font-size="11.500" fill="#777">EPM21,M1</text>
<path d="M1336 572v7l-4-3.500zM1350 572v7l4-3.500z" fill="#888"/>

<!-- terminal -->
<rect y="588" width="1366" height="117" fill="#f0f0f0"/>
<rect x="15" y="589" width="1351" height="92" fill="#fff"/>
<rect x="15" y="589" width="1351" height="22" fill="url(#hd)"/>
<path d="M15 611.500H1366M15 631.500H1366M15 671.500H1366" stroke="#cfcfcf"/>
<path d="M15.500 589V681" stroke="#aaa"/>
<path d="M178.500 589V632M291.500 589V632M431.500 589V632M556.500 589V632M1049.500 589V632M1173.500 589V632M178.500 653V672M291.500 653V672M431.500 653V672M556.500 653V672M1049.500 653V672M1173.500 653V672" stroke="#d4d4d4"/>
<g class="t"><text x="23" y="605">Символ</text><text x="185" y="605">Тикет</text><text x="368" y="605">Время</text><text x="550" y="605" text-anchor="end">Тип</text><text x="1038" y="605">Р</text><text x="1167" y="605" text-anchor="end">Цена</text><text x="1356" y="605" text-anchor="end">Прибыль</text>
<text x="37" y="627">mesm21</text><text x="181" y="627">16775070</text><text x="427" y="627" text-anchor="end">2021.06.03 06:14:48</text><text x="553" y="627" text-anchor="end">buy</text><text x="1169" y="627" text-anchor="end">4207.50</text><text x="1340" y="627" text-anchor="end">0.00</text>
<text x="37" y="667">mesm21</text><text x="181" y="667">16775084</text><text x="427" y="667" text-anchor="end">2021.06.03 06:14:48</text><text x="553" y="667" text-anchor="end">sell limit</text><text x="1169" y="667" text-anchor="end">4208.75</text><text x="1340" y="667" text-anchor="end">placed</text></g>
<path d="M415 600h10l-5 5z" fill="#333"/>
<path d="M20 615h10v9l-4 4h-6z" fill="#fff" stroke="#2a80d0" stroke-width="1.500"/><path d="M22 618h6M22 621h6" stroke="#2a80d0"/>
<path d="M20 655h10v9l-4 4h-6z" fill="#fff" stroke="#e8613a" stroke-width="1.500"/><path d="M22 658h6M22 661h6" stroke="#e8613a"/>
<path d="M1348 618l8 8M1356 618l-8 8M1348 658l8 8M1356 658l-8 8" stroke="#aaa" stroke-width="2.500"/>
<rect x="15" y="632" width="1351" height="21" fill="#c0c0c0"/>
<circle cx="26" cy="643" r="3.500" fill="#777"/>
<g font-size="11.500" font-weight="bold" fill="#111">
<text x="38" y="647" textLength="101" lengthAdjust="spacingAndGlyphs">Баланс: 174.50 USD</text>
<text x="146" y="647" textLength="88" lengthAdjust="spacingAndGlyphs">Средства: 174.50</text>
<text x="241" y="647" textLength="71" lengthAdjust="spacingAndGlyphs">Маржа: 40.00</text>
<text x="319" y="647" textLength="139" lengthAdjust="spacingAndGlyphs">Свободная маржа: 134.50</text>
<text x="465" y="647" textLength="105" lengthAdjust="spacingAndGlyphs">Уровень маржи: 436</text>
</g>
<text x="1340" y="647" font-size="12" font-weight="bold" fill="#111" text-anchor="end">0.00</text>
<circle cx="1352" cy="642" r="8" fill="#e8e8e8"/><path d="M1346 642h12M1352 636v12" stroke="#4fb81f" stroke-width="2.500"/>
<!-- left strip -->
<rect x="2" y="602" width="12" height="100" fill="#dbe4ee"/>
<text transform="translate(12,700) rotate(-90)" font-size="11" fill="#777" textLength="68" lengthAdjust="spacingAndGlyphs">Инструменты</text>
<path d="M4 590l6 6M10 590l-6 6" stroke="#111" stroke-width="2"/>
<!-- bottom tabs -->
<path d="M18 680.500H1366" stroke="#111"/>
<path d="M18.500 681V698.500H87.500V681" fill="#fff" stroke="#111"/><path d="M18 681V698" stroke="#888"/>
<text x="28" y="694" font-size="11.500" fill="#111" textLength="49" lengthAdjust="spacingAndGlyphs">Торговля</text>
<g class="gt" font-size="11.500"><text x="97" y="694" textLength="40" lengthAdjust="spacingAndGlyphs">Активы</text><text x="157" y="694" textLength="45" lengthAdjust="spacingAndGlyphs">История</text><text x="222" y="694" textLength="45" lengthAdjust="spacingAndGlyphs">Новости</text><text x="288" y="694" textLength="33" lengthAdjust="spacingAndGlyphs">Почта</text><text x="348" y="694" textLength="56" lengthAdjust="spacingAndGlyphs">Календарь</text><text x="424" y="694" textLength="54" lengthAdjust="spacingAndGlyphs">Компания</text><text x="499" y="694" textLength="39" lengthAdjust="spacingAndGlyphs">Алерты</text><text x="558" y="694">Ста</text></g>
<text x="322" y="697" font-size="9" fill="#e01010">7</text>
<path d="M147.500 685v13M212.500 685v13M278.500 685v13M338.500 685v13M414.500 685v13M488.500 685v13M548.500 685v13" stroke="#888"/>
<!-- status -->
<rect y="700" width="1366" height="28" fill="#f0f0f0"/><path d="M0 704.500H1366" stroke="#c4c4c4"/>
<rect x="1046" y="688" width="12" height="11" fill="#f5c21f" stroke="#caa017"/><path d="M1049 688v-2a3 3 0 0 1 6 0v2" fill="none" stroke="#777"/><path d="M1048 697l2-3 2 2 2-2 2 3z" fill="#1d5fb4"/>
<text x="1062" y="698" font-size="12" fill="#222" textLength="40" lengthAdjust="spacingAndGlyphs">Маркет</text>
<path d="M1119 691a7 7 0 0 1 10 0M1121 693a4 4 0 0 1 6 0" fill="none" stroke="#3aa0d8"/><rect x="1122" y="693" width="2.500" height="6" fill="#1fbf1f"/><rect x="1126" y="691" width="2.500" height="7" fill="#1fbf1f"/>
<text x="1134" y="698" font-size="12" fill="#222" textLength="46" lengthAdjust="spacingAndGlyphs">Сигналы</text>
<path d="M1196 692a4 4 0 0 1 4-5 5 5 0 0 1 8 1 3 3 0 0 1 2 4" fill="none" stroke="#3a94d0"/><rect x="1197" y="691" width="11" height="4" fill="#3b4a3b"/><rect x="1197" y="696" width="11" height="3" fill="#3b4a3b"/>
<text x="1212" y="698" font-size="12" fill="#222">VPS</text>
<rect x="1245" y="687" width="17" height="13" fill="#333" stroke="#1f5fa8"/><rect x="1245" y="686" width="17" height="3" fill="#1f5fa8"/><path d="M1247 696l4-3 3 2 5-4" fill="none" stroke="#7ec800"/>
<text x="1263" y="698" font-size="12" fill="#222" textLength="90" lengthAdjust="spacingAndGlyphs">Тестер стратегий</text>
<text x="2" y="722" font-size="12" fill="#111" textLength="173" lengthAdjust="spacingAndGlyphs">Для вызова справки нажмите F1</text>
<path d="M1045.500 709v15M1112.500 709v15M1181.500 709v15M1247.500 709v15" stroke="#aaa"/>
<g class="t"><text x="1051" y="722">L: 4208.75</text><text x="1118" y="722">C: 4209.00</text><text x="1187" y="722">V: 22</text><text x="1273" y="722">3868 / 9 Kb</text></g>
<rect x="1254" y="708" width="12" height="16" fill="#4aa4e0" stroke="#1f5fa8"/><circle cx="1265" cy="722" r="4.500" fill="#2fa82f" stroke="#fff"/>

<!-- taskbar -->
<rect y="728" width="1366" height="40" fill="url(#tk)"/>
<path d="M0 728.500H1366" stroke="#4a6a90"/>
<circle cx="27" cy="748" r="18" fill="url(#orb)" stroke="#123a66"/>
<path d="M18 741l8-2v8l-8 1z" fill="#e8582c"/><path d="M28 739l9-1v8l-9 1z" fill="#8cc63f"/><path d="M18 750l8-1v8l-8-2z" fill="#2f8fd8"/><path d="M28 749l9-1v9l-9-1z" fill="#f5c21f"/>
<!-- excel -->
<rect x="74" y="733" width="28" height="28" fill="#f4f9f4" stroke="#1d7a3a" stroke-width="1.500"/><rect x="75" y="733" width="14" height="24" fill="#2a9a4a"/><text x="82" y="752" font-size="20" font-weight="bold" fill="#fff" text-anchor="middle">X</text><path d="M91 740h9M91 745h9M91 750h9" stroke="#7ab98a"/>
<!-- word -->
<rect x="136" y="733" width="28" height="28" fill="#fff" stroke="#2a5aa8" stroke-width="1.500"/><rect x="137" y="734" width="26" height="5" fill="#2a5aa8"/><text x="148" y="755" font-size="20" font-weight="bold" fill="#1e62c0" text-anchor="middle">W</text>
<!-- calculator -->
<path d="M201 736l21-3 6 26-20 3z" fill="#b8b8b8" stroke="#777"/><path d="M204 738l15-2 2 7-15 2z" fill="#dbe0d0" stroke="#555"/><path d="M207 748l14-2M208 752l14-2M209 756l14-2" stroke="#444" stroke-width="2" stroke-dasharray="2 1"/>
<!-- folder -->
<path d="M260 741h12l3 3h16v18h-31z" fill="#f3d681" stroke="#bfa04a"/><rect x="268" y="735" width="18" height="8" fill="#fff" stroke="#bfa04a"/><rect x="270" y="737" width="3" height="3" fill="#4a90d0"/><rect x="280" y="737" width="3" height="3" fill="#e06030"/><path d="M268 752h16v8h-3v-4h-10v4h-3z" fill="#4a8ac8"/>
<!-- opera -->
<rect x="310" y="729" width="57" height="38" fill="#1a3a66" stroke="#4a6a90"/>
<ellipse cx="338" cy="748" rx="11" ry="14" fill="none" stroke="#e0111e" stroke-width="7"/>
<!-- mt5 -->
<rect x="372" y="729" width="58" height="38" fill="#6a7f9a" stroke="#9fb0c4"/>
<circle cx="391" cy="752" r="6" fill="#f0c020" stroke="#777"/><circle cx="409" cy="754" r="6" fill="#3a7ac0"/><circle cx="400" cy="742" r="7" fill="#3aa04a"/><circle cx="400" cy="749" r="7" fill="#e8a020" stroke="#fff"/><text x="400" y="753" font-size="10" font-weight="bold" fill="#fff" text-anchor="middle">5</text>
<!-- tray -->
<text x="1078" y="750" font-size="11.500" fill="#f0f0f0">EN</text>
<path d="M1110 743l6-3 6 3v7c0 4-3 6-6 8-3-2-6-4-6-8z" fill="#1a9a80"/><path d="M1113 749l2 3 4-5" stroke="#fff" fill="none"/>
<rect x="1133" y="741" width="7" height="12" fill="#888"/><rect x="1131" y="751" width="11" height="7" fill="#555"/><circle cx="1143" cy="752" r="4.500" fill="#2a8a2a"/><path d="M1141 752l1.500 2 3-4" stroke="#fff" fill="none"/>
<circle cx="1164" cy="750" r="8" fill="#64b84a"/><circle cx="1167" cy="751" r="6" fill="#8a5ad0" stroke="#fff"/><text x="1167" y="755" font-size="9" font-weight="bold" fill="#fff" text-anchor="middle">4</text>
<path d="M1182 742v16" stroke="#fff" stroke-width="1.500"/><path d="M1183 742c3-1 6 2 11 0v8c-5 2-8-1-11 0z" fill="#f5f5f5"/><circle cx="1191" cy="752" r="4.500" fill="#d8201c"/><path d="M1189 750l4 4M1193 750l-4 4" stroke="#fff"/>
<path d="M1205 756h2v2h-2zM1209 754h2v4h-2zM1213 751h2v7h-2zM1217 748h2v10h-2z" fill="#fff"/>
<path d="M1230 745h4l4-4v15l-4-4h-4z" fill="#f0f0f0"/><path d="M1240 745a5 5 0 0 1 0 7M1242 743a8 8 0 0 1 0 11" fill="none" stroke="#dfe6ee"/>
<path d="M1254 744h8v14h-8z" fill="#f0f0f0"/><path d="M1262 745h5v5h-5M1264 742v3M1267 742v3" stroke="#fff" fill="none" stroke-width="1.500"/><path d="M1256 749l3 3" stroke="#333"/>
<text x="1312.500" y="745" font-size="12" fill="#fff" text-anchor="middle">11:14</text>
<text x="1312.500" y="762" font-size="12" fill="#fff" text-anchor="middle">03.06.2021</text>
<rect x="1352.500" y="729.500" width="13" height="38" fill="#2a4a72" stroke="#7a8ea8"/>

<!-- DIALOG -->
<rect x="568" y="481" width="468" height="290" fill="#dfe9f2" opacity=".2"/>
<rect x="570" y="483" width="464" height="285" fill="#1c2e42"/>
<g filter="url(#bl)">
<rect x="560" y="478" width="110" height="36" fill="#4b5b6c"/>
<rect x="670" y="483" width="100" height="30" fill="#24384a"/>
<rect x="772" y="486" width="12" height="28" fill="#ffffff"/>
<rect x="800" y="490" width="30" height="25" fill="#1a7a8a"/>
<rect x="835" y="490" width="20" height="25" fill="#a03a4a"/>
<rect x="860" y="492" width="30" height="25" fill="#1a8a90"/>
<rect x="895" y="490" width="18" height="25" fill="#8a2a3a"/>
<rect x="920" y="492" width="50" height="25" fill="#104858"/>
<rect x="975" y="490" width="55" height="25" fill="#12283c"/>
<rect x="566" y="600" width="10" height="175" fill="#a8c6de"/>
<rect x="1027" y="512" width="8" height="260" fill="#2a5a70"/>
</g>
<rect x="570" y="483" width="464" height="1" fill="#9aa8b6"/>
<ellipse cx="628" cy="497" rx="56" ry="9" fill="#c4d0dc" opacity=".35" filter="url(#bl)"/>
<text x="577" y="501" font-size="12" fill="#0c1622">MESM21, Тик&#160;&#160;1000</text>
<rect x="981.500" y="480" width="46" height="19" rx="3" fill="#14283c" stroke="#a8b8c8"/>
<path d="M999 485l9 8M1008 485l-9 8" stroke="#f4f4f4" stroke-width="2.800"/>
<rect x="576" y="512" width="452" height="256" fill="#f0f0f0"/>
<g class="d" transform="translate(570,480) scale(.33333)">
<rect x="38" y="113" width="249" height="102" fill="#ff7f50" stroke="#8a2c10" stroke-width="3"/>
<text x="162" y="155" text-anchor="middle" style="font-size:33px">Best Sell Limit</text><text x="162" y="194" text-anchor="middle" style="font-size:33px">4207.75</text>
<rect x="40" y="266" width="244" height="96" fill="#1e90ff" stroke="#0b2a55" stroke-width="8"/>
<text x="160" y="305" text-anchor="middle" style="font-size:33px">Best Buy Limit</text><text x="160" y="344" text-anchor="middle" style="font-size:33px">4207.50</text>
<rect x="322" y="113" width="148" height="57" fill="#ff7f50" stroke="#8a2c10" stroke-width="3"/><text x="396" y="152" text-anchor="middle">SELL</text>
<rect x="508" y="113" width="192" height="57" fill="#ff7f50" stroke="#8a2c10" stroke-width="3"/><text x="608" y="152" text-anchor="middle">Delete</text>
<rect x="322" y="204" width="148" height="67" fill="#f00" stroke="#7a1010" stroke-width="3"/><text x="396" y="245" text-anchor="middle" font-weight="bold" style="font-size:33px;fill:#200">CLOSE</text>
<rect x="508" y="204" width="192" height="67" fill="#d3d3d3" stroke="#555" stroke-width="3"/><text x="607" y="248" text-anchor="middle">Delete all</text>
<rect x="322" y="305" width="148" height="57" fill="#1e90ff" stroke="#0b3a70" stroke-width="3"/><text x="396" y="344" text-anchor="middle">BUY</text>
<rect x="508" y="305" width="192" height="57" fill="#1e90ff" stroke="#0b3a70" stroke-width="3"/><text x="608" y="344" text-anchor="middle">Delete</text>
<rect x="508" y="395" width="192" height="57" fill="#d3d3d3" stroke="#555" stroke-width="3"/><text x="607" y="438" text-anchor="middle" style="font-size:33px">Reverse</text>

<text x="40" y="432" textLength="220" lengthAdjust="spacingAndGlyphs">объем ордера</text>
<rect x="302" y="395" width="168" height="60" fill="#fff" stroke="#c4c8cc" stroke-width="2.500"/><text x="308" y="432">1</text><use href="#spin" x="424" y="400"/>
<use href="#chk" x="37" y="490"/><text x="88" y="516">SL</text>
<rect x="163" y="485" width="192" height="60" fill="#fff" stroke="#c4c8cc" stroke-width="2.500"/><text x="170" y="522">7</text><use href="#spin" x="311" y="490"/>
<use href="#chk" x="377" y="490"/><text x="427" y="516">TP</text>
<rect x="508" y="485" width="192" height="60" fill="#fff" stroke="#c4c8cc" stroke-width="2.500"/><text x="515" y="522">5</text><use href="#spin" x="656" y="490"/>

<rect x="722" y="131" width="632" height="345" rx="9" fill="none" stroke="#d8dde2" stroke-width="2.500"/>
<rect x="740" y="120" width="268" height="24" fill="#f0f0f0"/><text x="746" y="143" textLength="256" lengthAdjust="spacingAndGlyphs">Лимитный ордер</text>
<use href="#chk" x="740" y="163"/><text x="790" y="192" textLength="485" lengthAdjust="spacingAndGlyphs">отменяется, если цена ушла на</text>
<rect x="739" y="215" width="169" height="57" fill="#fff" stroke="#c4c8cc" stroke-width="2.500"/><text x="746" y="250">5</text><use href="#spin" x="862" y="219"/><text x="933" y="252" textLength="85" lengthAdjust="spacingAndGlyphs">тиков</text>
<use href="#unc" x="740" y="295"/><text x="790" y="323" textLength="268" lengthAdjust="spacingAndGlyphs">передвигается на</text>
<rect x="1090" y="281" width="124" height="57" fill="#fff" stroke="#c4c8cc" stroke-width="2.500"/><text x="1096" y="316">0</text><use href="#spin" x="1168" y="285"/><text x="1236" y="320" textLength="85" lengthAdjust="spacingAndGlyphs">тиков</text>
<text x="741" y="386" textLength="279" lengthAdjust="spacingAndGlyphs">если цена прошла</text>
<rect x="1048" y="347" width="139" height="57" fill="#fff" stroke="#c4c8cc" stroke-width="2.500"/><text x="1054" y="382">0</text><use href="#spin" x="1141" y="351"/><text x="1206" y="390" textLength="114" lengthAdjust="spacingAndGlyphs">тиков и</text>
<text x="741" y="449" textLength="261" lengthAdjust="spacingAndGlyphs">прошло не более</text>
<rect x="1048" y="412" width="171" height="57" fill="#fff" stroke="#c4c8cc" stroke-width="2.500"/><text x="1054" y="447">0</text><use href="#spin" x="1174" y="416"/><text x="1245" y="449" textLength="61" lengthAdjust="spacingAndGlyphs">сек.</text>
<use href="#chk" x="748" y="500"/><text x="798" y="527" textLength="492" lengthAdjust="spacingAndGlyphs">тейкпрофит лимитным ордером</text>

<rect x="37" y="578" width="663" height="330" rx="9" fill="none" stroke="#d8dde2" stroke-width="2.500"/>
<rect x="56" y="566" width="246" height="24" fill="#f0f0f0"/><text x="63" y="590" textLength="232" lengthAdjust="spacingAndGlyphs">Дельта/Объем</text>
<circle cx="75" cy="642" r="16" fill="#e4e4e4" stroke="#999" stroke-width="3"/><text x="108" y="653" textLength="124" lengthAdjust="spacingAndGlyphs">покупка</text>
<use href="#unc" x="277" y="622"/><text x="328" y="653" font-weight="bold" style="font-size:41px;fill:#006400" textLength="245" lengthAdjust="spacingAndGlyphs">ВКЛЮЧИТЬ</text>
<circle cx="75" cy="711" r="16" fill="#e4e4e4" stroke="#999" stroke-width="3"/><circle cx="75" cy="711" r="9" fill="#0d4c9c"/><text x="108" y="722" textLength="131" lengthAdjust="spacingAndGlyphs">продажа</text>
<rect x="277" y="685" width="169" height="57" fill="#fff" stroke="#c4c8cc" stroke-width="2.500"/><text x="283" y="722">10</text><use href="#spin" x="400" y="689"/><text x="453" y="722" textLength="179" lengthAdjust="spacingAndGlyphs">таймер, сек</text>
<use href="#chk" x="59" y="767"/><text x="108" y="794" textLength="318" lengthAdjust="spacingAndGlyphs">использовать линию</text>
<use href="#chk" x="481" y="767"/><text x="531" y="794" textLength="92" lengthAdjust="spacingAndGlyphs">лимит</text>
<rect x="58" y="823" width="124" height="57" fill="#fff" stroke="#c4c8cc" stroke-width="2.500"/><text x="65" y="860">1</text><use href="#spin" x="136" y="827"/><text x="201" y="860" textLength="404" lengthAdjust="spacingAndGlyphs">допуск по сигналу в тиках</text>

<rect x="722" y="578" width="632" height="330" rx="9" fill="none" stroke="#d8dde2" stroke-width="2.500"/>
<rect x="740" y="566" width="168" height="24" fill="#f0f0f0"/><text x="748" y="590" textLength="153" lengthAdjust="spacingAndGlyphs">Имбаланс</text>
<circle cx="761" cy="633" r="16" fill="#e4e4e4" stroke="#999" stroke-width="3"/><text x="795" y="644" textLength="124" lengthAdjust="spacingAndGlyphs">покупка</text>
<use href="#unc" x="967" y="618"/><text x="1018" y="650" font-weight="bold" style="font-size:41px;fill:#006400" textLength="245" lengthAdjust="spacingAndGlyphs">ВКЛЮЧИТЬ</text>
<circle cx="761" cy="708" r="16" fill="#e4e4e4" stroke="#999" stroke-width="3"/><circle cx="761" cy="708" r="9" fill="#0d4c9c"/><text x="795" y="719" textLength="131" lengthAdjust="spacingAndGlyphs">продажа</text>
<rect x="964" y="682" width="168" height="58" fill="#fff" stroke="#c4c8cc" stroke-width="2.500"/><text x="970" y="719">10</text><use href="#spin" x="1087" y="687"/><text x="1146" y="722" textLength="179" lengthAdjust="spacingAndGlyphs">таймер, сек</text>
<use href="#chk" x="746" y="767"/><text x="795" y="794" textLength="318" lengthAdjust="spacingAndGlyphs">использовать линию</text>
<use href="#chk" x="1174" y="767"/><text x="1224" y="794" textLength="92" lengthAdjust="spacingAndGlyphs">лимит</text>
<rect x="748" y="823" width="124" height="57" fill="#fff" stroke="#c4c8cc" stroke-width="2.500"/><text x="755" y="860">1</text><use href="#spin" x="826" y="827"/><text x="893" y="860" textLength="404" lengthAdjust="spacingAndGlyphs">допуск по сигналу в тиках</text>
</g>
</svg>
</body></html>
